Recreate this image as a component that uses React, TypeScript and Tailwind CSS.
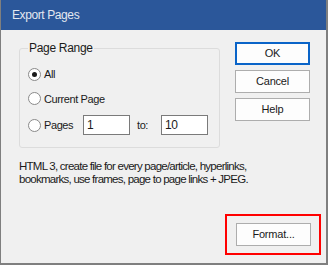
export default function App() {
  const font = { fontFamily: '"Liberation Sans", Arial, sans-serif' };

  const Radio = ({ checked, label }: { checked?: boolean; label: string }) => (
    <div className="flex items-center gap-[3px]">
      <span className="flex h-[13px] w-[13px] items-center justify-center rounded-full border border-[#8a8a8a] bg-white">
        {checked && <span className="h-[5px] w-[5px] rounded-full bg-[#1a1a1a]" />}
      </span>
      <span>{label}</span>
    </div>
  );

  const Button = ({ label, primary }: { label: string; primary?: boolean }) => (
    <button
      className={
        'h-[23px] w-[75px] bg-[#fdfdfd] text-[11px] tracking-[-0.2px] text-[#1a1a1a] ' +
        (primary ? 'border-2 border-[#0a64c8]' : 'border border-[#adadad]')
      }
    >
      {label}
    </button>
  );

  return (
    <div
      className="flex h-[265px] w-[328px] flex-col border-b-2 border-l border-r-2 border-[#7f7f7f] bg-[#f0f0f0] text-[11px] tracking-[-0.4px] text-[#1a1a1a]"
      style={font}
    >
      <div className="flex h-[30px] shrink-0 items-center bg-[#2b579a] pl-[11px] text-[12px] tracking-[-0.4px] text-[#e4e8f0]">
        Export Pages
      </div>

      <div className="flex pl-[18px] pt-[12px]">
        <fieldset className="h-[106px] w-[201px] rounded-[3px] border border-[#dcdcdc] px-[8px]">
          <legend className="px-[1px] text-[12px] leading-[12px] tracking-[-0.3px]">Page Range</legend>
          <div className="mt-[12px] flex flex-col gap-[8px]">
            <Radio checked label="All" />
            <Radio label="Current Page" />
            <div className="flex items-center">
              <div className="w-[55px]">
                <Radio label="Pages" />
              </div>
              <div className="flex h-[20px] w-[47px] items-center border border-[#7a7a7a] bg-white pl-[3px] text-[12px]">1</div>
              <span className="ml-[7px] w-[24px]">to:</span>
              <div className="flex h-[20px] w-[47px] items-center border border-[#7a7a7a] bg-white pl-[3px] text-[12px]">10</div>
            </div>
          </div>
        </fieldset>

        <div className="ml-[15px] flex flex-col gap-[5px]">
          <Button primary label="OK" />
          <Button label="Cancel" />
          <Button label="Help" />
        </div>
      </div>

      <p className="mt-[12px] pl-[18px] pr-[10px] text-[11.5px] leading-[13px] tracking-[-0.75px]">
        HTML 3, create file for every page/article, hyperlinks,
        <br />
        bookmarks, use frames, page to page links + JPEG.
      </p>

      <div className="mt-auto mb-[8px] flex justify-end pr-[5px]">
        <div className="border-2 border-[#ff0000] pb-[7px] pl-[9px] pr-[8px] pt-[7px]">
          <Button label="Format..." />
        </div>
      </div>
    </div>
  );
}
